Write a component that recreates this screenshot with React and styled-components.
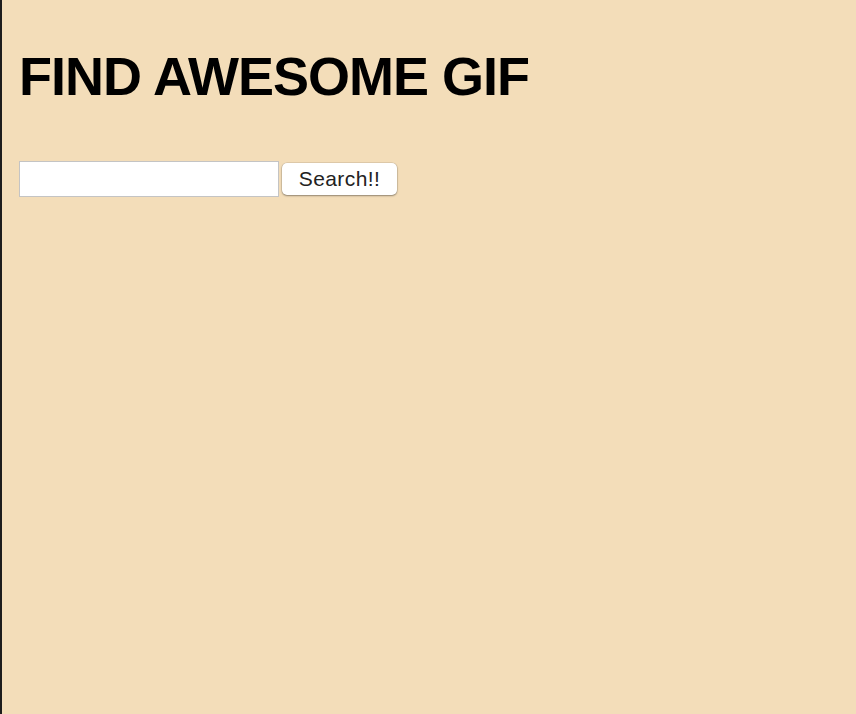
import styled, { createGlobalStyle } from "styled-components";

const GlobalStyle = createGlobalStyle`
  html, body {
    margin: 0;
    padding: 0;
    background: #f3ddb9;
  }
  #root {
    min-height: 100vh;
  }
`;

const Page = styled.div`
  min-height: 714px;
  box-sizing: border-box;
  border-left: 2px solid #1c1c1c;
  background: #f3ddb9;
  padding: 46px 17px 0;
  font-family: "Liberation Sans", Arial, sans-serif;
`;

const Title = styled.h1`
  margin: 0 0 55px 0;
  font-size: 54px;
  font-weight: 700;
  line-height: 60px;
  letter-spacing: -1px;
  color: #000;
`;

const SearchForm = styled.form`
  display: flex;
  align-items: center;
  gap: 3px;
`;

const SearchInput = styled.input`
  width: 260px;
  height: 36px;
  box-sizing: border-box;
  border: 1px solid #c4c4c4;
  background: #fff;
  font-size: 18px;
  padding: 2px 6px;
  outline: none;
`;

const SearchButton = styled.button`
  height: 32px;
  width: 115px;
  box-sizing: border-box;
  border: none;
  border-radius: 5px;
  background: #fff;
  box-shadow: 0 0 0 0.5px rgba(0, 0, 0, 0.15), 0 1px 2px rgba(0, 0, 0, 0.35);
  font-family: "Liberation Sans", Arial, sans-serif;
  font-size: 21px;
  letter-spacing: 0.4px;
  color: #222;
  padding: 0 10px;
  cursor: pointer;
`;

export default function App() {
  return (
    <>
      <GlobalStyle />
      <Page>
        <Title>FIND AWESOME GIF</Title>
        <SearchForm onSubmit={(e) => e.preventDefault()}>
          <SearchInput type="text" />
          <SearchButton type="submit">Search!!</SearchButton>
        </SearchForm>
      </Page>
    </>
  );
}
